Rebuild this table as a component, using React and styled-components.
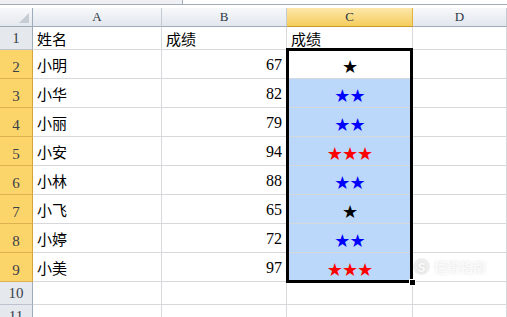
import React from 'react';
import styled, { createGlobalStyle } from 'styled-components';

const GlobalStyle = createGlobalStyle`
  body {
    margin: 0;
    background: #ffffff;
    overflow: hidden;
  }
`;

const rows = [
  { name: '小明', score: 67, stars: 1, color: '#000000' },
  { name: '小华', score: 82, stars: 2, color: '#0000ff' },
  { name: '小丽', score: 79, stars: 2, color: '#0000ff' },
  { name: '小安', score: 94, stars: 3, color: '#ff0000' },
  { name: '小林', score: 88, stars: 2, color: '#0000ff' },
  { name: '小飞', score: 65, stars: 1, color: '#000000' },
  { name: '小婷', score: 72, stars: 2, color: '#0000ff' },
  { name: '小美', score: 97, stars: 3, color: '#ff0000' },
];

const Window = styled.div`
  position: relative;
  width: 507px;
  height: 317px;
  overflow: hidden;
  font-family: "Noto Sans CJK SC", "Liberation Serif", serif;
`;

const FormulaEdge = styled.div`
  display: flex;
  height: 4px;
  border-bottom: 1px solid #a5acb5;
  background: #ffffff;
`;

const NameBoxEdge = styled.div`
  width: 182px;
  background: #eef0f3;
  border-right: 1px solid #a5acb5;
`;

const Gap = styled.div`
  height: 3px;
  background: #ffffff;
`;

const Grid = styled.div`
  display: grid;
  grid-template-columns: 33px 129px 125px 126px 94px;
  grid-template-rows: 19px 23px repeat(8, 29px) 23px 23px;
`;

const Corner = styled.div`
  position: relative;
  background: linear-gradient(#f7f8fa, #e4e8ed);
  border-right: 1px solid #9eabb9;
  border-bottom: 1px solid #9eabb9;

  &::after {
    content: '';
    position: absolute;
    right: 3px;
    bottom: 3px;
    border-left: 10px solid transparent;
    border-bottom: 10px solid #c6ccd3;
  }
`;

const ColHead = styled.div`
  display: flex;
  align-items: center;
  justify-content: center;
  font-family: "Liberation Serif", serif;
  font-size: 13px;
  color: #2c3744;
  background: ${({ active }) =>
    active ? 'linear-gradient(#fce7ab, #f6cd5c)' : 'linear-gradient(#f7f8fa, #e2e7ee)'};
  border-right: 1px solid ${({ active }) => (active ? '#e2b23e' : '#c3cad2')};
  border-bottom: 1px solid ${({ active }) => (active ? '#c99a2e' : '#9eabb9')};
`;

const RowHead = styled.div`
  display: flex;
  align-items: flex-end;
  justify-content: center;
  padding-bottom: 2px;
  font-family: "Liberation Serif", serif;
  font-size: 15px;
  line-height: 17px;
  color: #39404a;
  background: ${({ active }) => (active ? '#fcd56a' : '#e5e9ee')};
  border-right: 1px solid ${({ active }) => (active ? '#d4a43a' : '#9eabb9')};
  border-bottom: 1px solid ${({ active }) => (active ? '#ddb052' : '#bcc3cc')};
`;

const Cell = styled.div`
  display: flex;
  align-items: flex-end;
  justify-content: ${({ align }) => align || 'flex-start'};
  padding: 0 4px ${({ short }) => (short ? '2px' : '5px')} 4px;
  font-size: 15px;
  line-height: 17px;
  color: #000000;
  background: ${({ highlight }) => (highlight ? '#bbd8fa' : '#ffffff')};
  border-right: 1px solid #d6d8db;
  border-bottom: 1px solid #d6d8db;
  box-sizing: border-box;
  white-space: nowrap;
`;

const Number = styled.span`
  font-family: "Liberation Serif", serif;
  font-size: 16px;
  line-height: 17px;
`;

const Stars = styled.span`
  font-family: "DejaVu Sans", sans-serif;
  font-size: 18px;
  line-height: 18px;
  letter-spacing: -1px;
  color: ${({ color }) => color};
  margin-bottom: -3px;
`;

const Selection = styled.div`
  position: absolute;
  left: 286px;
  top: 48px;
  width: 121px;
  height: 229px;
  border: 3px solid #000000;
  pointer-events: none;

  &::after {
    content: '';
    position: absolute;
    right: -6px;
    bottom: -6px;
    width: 5px;
    height: 5px;
    background: #000000;
    border: 1px solid #ffffff;
  }
`;

const Watermark = styled.div`
  position: absolute;
  left: 413px;
  top: 257px;
  display: flex;
  align-items: center;
  gap: 4px;
  font-size: 13px;
  font-weight: 700;
  color: rgba(255, 255, 255, 0.7);
  text-shadow: 0 0 3px rgba(120, 120, 120, 0.2);
`;

const WatermarkMark = styled.span`
  display: flex;
  align-items: center;
  justify-content: center;
  width: 17px;
  height: 17px;
  border-radius: 50%;
  background: rgba(200, 200, 200, 0.3);
  color: rgba(255, 255, 255, 0.85);
  font-size: 12px;
`;

const columns = ['A', 'B', 'C', 'D'];

export default function App() {
  return (
    <Window>
      <GlobalStyle />
      <FormulaEdge>
        <NameBoxEdge />
      </FormulaEdge>
      <Gap />
      <Grid>
        <Corner />
        {columns.map((c) => (
          <ColHead key={c} active={c === 'C'}>{c}</ColHead>
        ))}

        <RowHead>1</RowHead>
        <Cell short>姓名</Cell>
        <Cell short>成绩</Cell>
        <Cell short>成绩</Cell>
        <Cell short />

        {rows.map((r, i) => (
          <React.Fragment key={r.name}>
            <RowHead active>{i + 2}</RowHead>
            <Cell>{r.name}</Cell>
            <Cell align="flex-end">
              <Number>{r.score}</Number>
            </Cell>
            <Cell align="center" highlight={i > 0}>
              <Stars color={r.color}>{'★'.repeat(r.stars)}</Stars>
            </Cell>
            <Cell />
          </React.Fragment>
        ))}

        {[10, 11].map((n) => (
          <React.Fragment key={n}>
            <RowHead>{n}</RowHead>
            <Cell short />
            <Cell short />
            <Cell short />
            <Cell short />
          </React.Fragment>
        ))}
      </Grid>
      <Selection />
      <Watermark>
        <WatermarkMark>S</WatermarkMark>
        懂得指南
      </Watermark>
    </Window>
  );
}
